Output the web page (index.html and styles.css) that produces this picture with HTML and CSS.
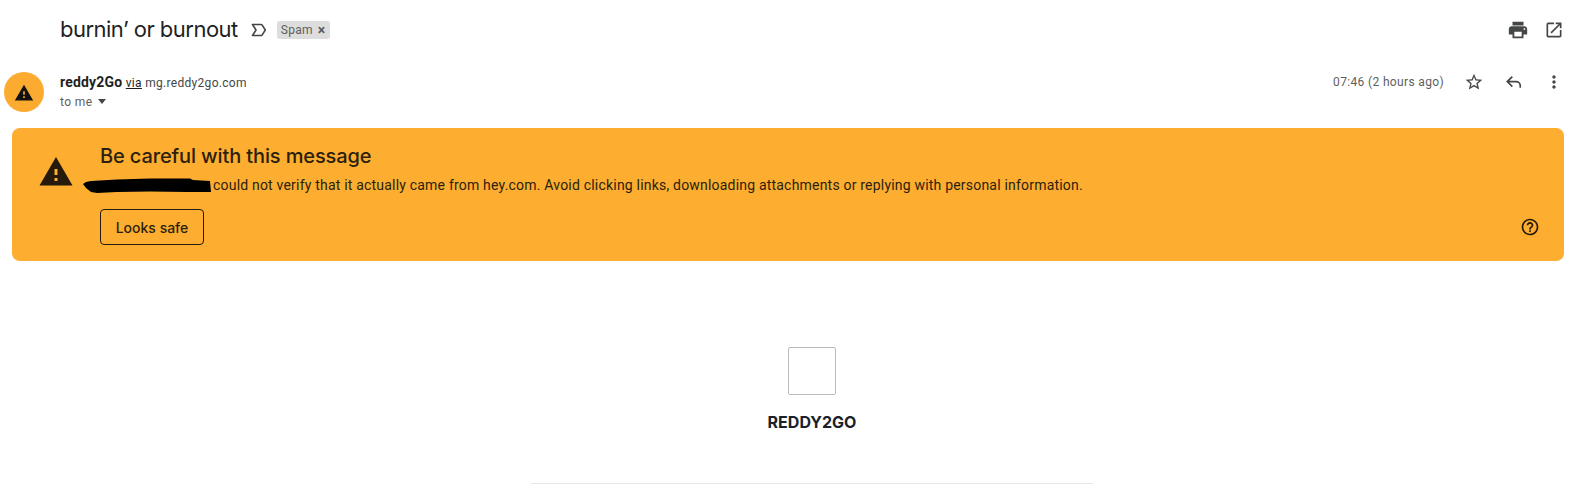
FILE: index.html
```html
<!DOCTYPE html>
<html lang="en">
<head>
<meta charset="utf-8">
<title>burnin' or burnout</title>
<link rel="stylesheet" href="styles.css">
</head>
<body>
<header class="subject-row">
  <div class="subject-left">
    <h1 class="subject">burnin’ or burnout</h1>
    <svg class="label-icon" viewBox="0 0 16 14" width="16" height="14"><path d="M1.500 1.500h8.500c.5 0 .9.2 1.200.6L14.300 7l-3.100 4.900c-.3.4-.7.6-1.200.6H1.500L5 7z" fill="none" stroke="#444746" stroke-width="1.600" stroke-linejoin="round"/></svg>
    <span class="chip">Spam <span class="chip-x">×</span></span>
  </div>
  <div class="subject-actions">
    <svg viewBox="0 0 24 24" width="22" height="22"><path fill="#444746" d="M19 8H5c-1.660 0-3 1.340-3 3v6h4v4h12v-4h4v-6c0-1.660-1.340-3-3-3zm-3 11H8v-5h8v5zm3-7c-.55 0-1-.45-1-1s.45-1 1-1 1 .45 1 1-.45 1-1 1zm-1-9H6v4h12V3z"/></svg>
    <svg viewBox="0 0 24 24" width="20" height="20"><path fill="#444746" d="M19 19H5V5h7V3H5a2 2 0 0 0-2 2v14a2 2 0 0 0 2 2h14c1.100 0 2-.9 2-2v-7h-2v7zM14 3v2h3.590l-9.830 9.830 1.410 1.410L19 6.410V10h2V3h-7z"/></svg>
  </div>
</header>

<section class="sender-row">
  <div class="avatar">
    <svg class="avatar-icon" viewBox="0 0 24 24" width="20" height="20"><path fill="#111" d="M1 21h22L12 2 1 21zm12-3h-2v-2h2v2zm0-4h-2v-4h2v4z"/></svg>
  </div>
  <div class="sender-info">
    <div class="sender-line"><b class="sender-name">reddy2Go</b> <span class="via">via</span> <span class="domain">mg.reddy2go.com</span></div>
    <div class="to-line">to me <span class="caret"></span></div>
  </div>
  <div class="sender-actions">
    <span class="time">07:46 (2 hours ago)</span>
    <svg class="star" viewBox="0 0 24 24" width="20" height="20"><path fill="#444746" d="M22 9.240l-7.190-.62L12 2 9.190 8.630 2 9.240l5.460 4.730L5.820 21 12 17.270 18.180 21l-1.630-7.030L22 9.240zM12 15.400l-3.760 2.270 1-4.280-3.320-2.880 4.380-.38L12 6.100l1.710 4.040 4.380.38-3.320 2.880 1 4.280L12 15.400z"/></svg>
    <svg class="reply" viewBox="0 0 24 24" width="20" height="20"><path fill="none" stroke="#444746" stroke-width="2" d="M10 5.500 3.900 11.500 10 17.500M4 11.500h10.500a5 5 0 0 1 5 5v2.500"/></svg>
    <svg class="more" viewBox="0 0 24 24" width="20" height="20"><path fill="#444746" d="M12 8c1.100 0 2-.9 2-2s-.9-2-2-2-2 .9-2 2 .9 2 2 2zm0 2c-1.100 0-2 .9-2 2s.9 2 2 2 2-.9 2-2-.9-2-2-2zm0 6c-1.100 0-2 .9-2 2s.9 2 2 2 2-.9 2-2-.9-2-2-2z"/></svg>
  </div>
</section>

<section class="warning">
  <svg class="warning-icon" viewBox="0 0 24 24" width="36" height="36"><path fill="#251a0b" d="M1 21h22L12 2 1 21zm12-3h-2v-2h2v2zm0-4h-2v-4h2v4z"/></svg>
  <div class="warning-body">
    <h2 class="warning-title">Be careful with this message</h2>
    <p class="warning-text"><svg class="redaction" viewBox="0 0 128 15" width="128" height="15"><path fill="#000" d="M0 6 3 4 8 3 34 1.500 67 .5 107 .5 110 2 127 3 128 14 104 14 67 13.500 34 14 14 15 8 14 3 10z"/></svg>could not verify that it actually came from hey.com. Avoid clicking links, downloading attachments or replying with personal information.</p>
    <button class="safe-btn">Looks safe</button>
  </div>
  <svg class="help" viewBox="0 0 24 24" width="20" height="20"><path fill="#251a0b" d="M11 18h2v-2h-2v2zm1-16C6.480 2 2 6.480 2 12s4.480 10 10 10 10-4.480 10-10S17.520 2 12 2zm0 18c-4.410 0-8-3.590-8-8s3.590-8 8-8 8 3.590 8 8-3.590 8-8 8zm0-14c-2.210 0-4 1.790-4 4h2c0-1.100.9-2 2-2s2 .9 2 2c0 2-3 1.750-3 5h2c0-2.250 3-2.500 3-5 0-2.210-1.790-4-4-4z"/></svg>
</section>

<main class="mail-body">
  <div class="logo-box"></div>
  <div class="brand">REDDY2GO</div>
  <hr class="divider">
</main>
</body>
</html>
```

FILE: styles.css
```css
* { box-sizing: border-box; }
html, body { margin: 0; padding: 0; background: #fff; }
body {
  width: 1576px;
  height: 501px;
  overflow: hidden;
  font-family: Roboto, "Liberation Sans", sans-serif;
  color: #1f1f1f;
}
.subject-row {
  display: flex;
  align-items: center;
  justify-content: space-between;
  height: 60px;
  padding: 0 12px 1px 60px;
}
.subject-left { display: flex; align-items: center; }
.subject {
  margin: -2px 0 0;
  font-family: Inter, sans-serif;
  font-weight: 400;
  font-size: 22px;
  line-height: 28px;
  letter-spacing: -.52px;
  color: #1f1f1f;
}
.label-icon { margin-left: 13px; }
.chip {
  margin-left: 10px;
  height: 18px;
  padding: 0 4px;
  display: inline-flex;
  align-items: center;
  gap: 5px;
  background: #ddd;
  border-radius: 3px;
  font-size: 12px;
  letter-spacing: .3px;
  color: #5e5e5e;
}
.chip-x { font-size: 14px; font-weight: 700; line-height: 1; }
.subject-actions { display: flex; align-items: center; gap: 15px; }
.sender-row {
  display: flex;
  height: 68px;
  padding: 12px 12px 0 4px;
}
.avatar {
  width: 40px;
  height: 40px;
  border-radius: 50%;
  background: #fbab2f;
  display: flex;
  align-items: center;
  justify-content: center;
}
.avatar-icon { margin-top: 1px; }
.sender-info { margin-left: 16px; flex: 1; }
.sender-line { font-size: 12px; line-height: 20px; color: #444746; letter-spacing: .3px; }
.sender-name { font-size: 14px; color: #1f1f1f; letter-spacing: .2px; }
.via { text-decoration: underline; color: #1f1f1f; }
.to-line { font-size: 12px; line-height: 19px; color: #5e5e5e; letter-spacing: .4px; }
.caret {
  display: inline-block;
  margin-left: 2px;
  border: 4.5px solid transparent;
  border-top: 5px solid #444746;
  border-bottom: 0;
  vertical-align: 2px;
}
.sender-actions { display: flex; align-items: flex-start; gap: 20px; }
.time { font-size: 12px; line-height: 20px; letter-spacing: .35px; color: #5e5e5e; }
.warning {
  display: flex;
  margin: 0 12px;
  height: 133px;
  padding: 13px 24px 0 26px;
  background: #fdad2f;
  border-radius: 8px;
  color: #2b1f0d;
}
.warning-icon { margin-top: 13px; }
.warning-body { margin-left: 26px; flex: 1; }
.warning-title {
  margin: 0;
  font-family: Inter, sans-serif;
  font-weight: 450;
  font-size: 20px;
  line-height: 30px;
  letter-spacing: -.12px;
}
.warning-text {
  display: flex;
  align-items: center;
  margin: 4px 0 0;
  font-size: 14px;
  line-height: 20px;
  letter-spacing: .2px;
  white-space: nowrap;
}
.redaction { display: block; flex: none; margin-left: -17px; margin-right: 2px; }
.safe-btn {
  display: block;
  margin-top: 14px;
  width: 104px;
  height: 36px;
  background: transparent;
  border: 1px solid #251a0b;
  border-radius: 4px;
  color: #2b1f0d;
  font-family: Inter, sans-serif;
  font-size: 14px;
  font-weight: 450;
}
.help { align-self: flex-end; margin-bottom: 24px; }
.mail-body {
  display: flex;
  flex-direction: column;
  align-items: center;
  padding: 86px 0 0 48px;
}
.logo-box {
  width: 48px;
  height: 48px;
  border: 1px solid #bbb;
  border-radius: 2px;
}
.brand {
  margin-top: 15px;
  font-family: Inter, sans-serif;
  font-weight: 700;
  font-size: 16px;
  line-height: 24px;
  color: #1a2129;
}
.divider {
  width: 562px;
  height: 1px;
  margin: 49px 0 0;
  border: 0;
  background: #e8e8e8;
}
```
